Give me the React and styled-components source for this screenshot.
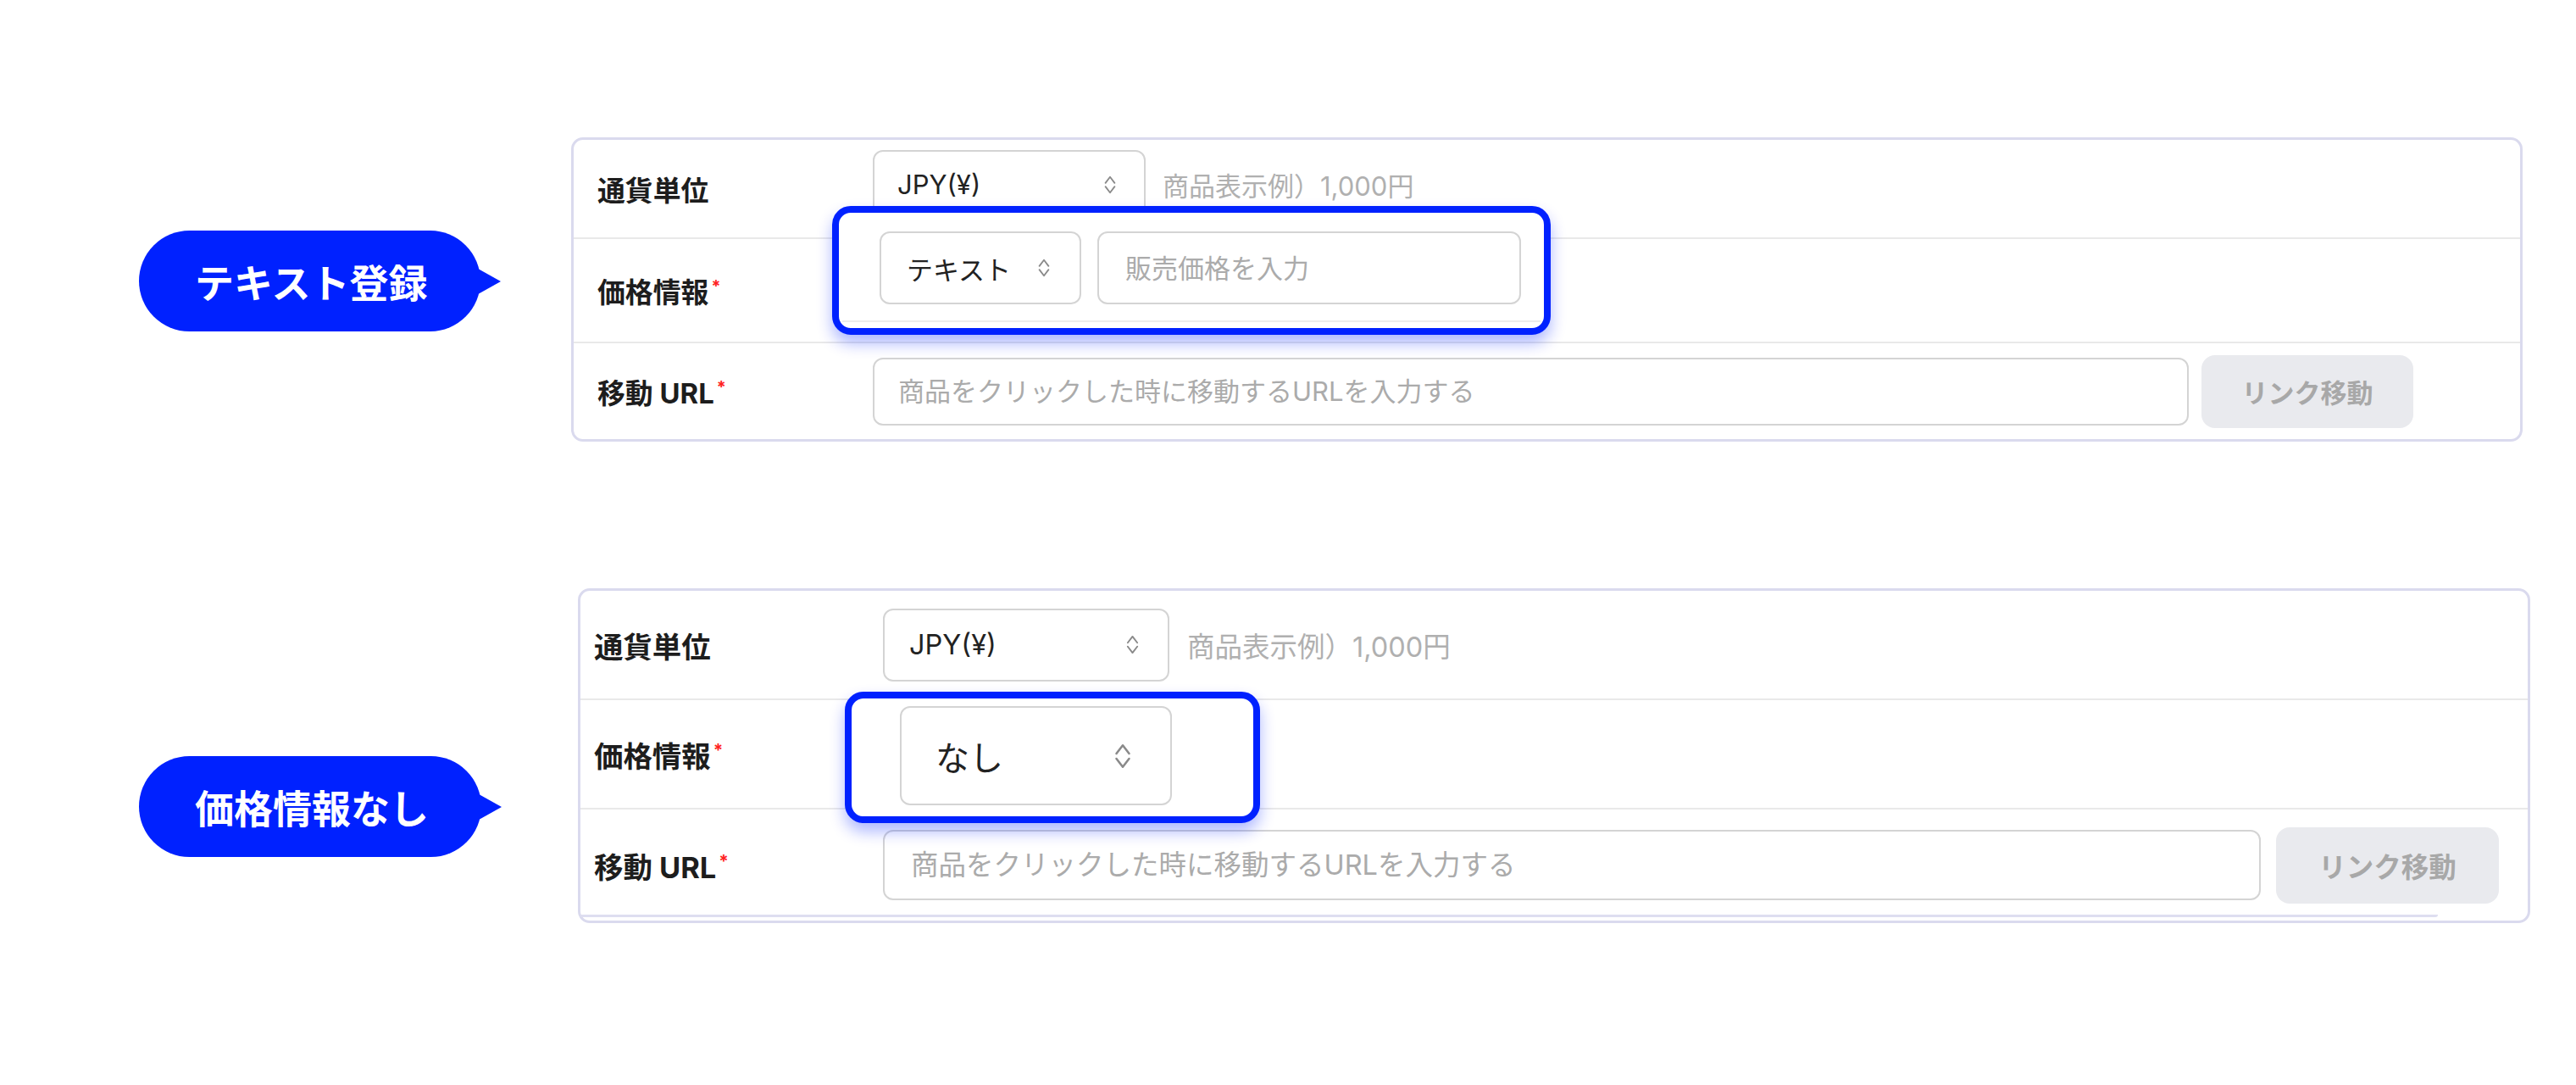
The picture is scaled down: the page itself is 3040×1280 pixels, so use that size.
import React from 'react';
import styled, { createGlobalStyle } from 'styled-components';

const BLUE = '#0021ff';

const GlobalStyle = createGlobalStyle`
  html, body {
    margin: 0;
    padding: 0;
    background: #fff;
  }
  body {
    font-family: 'Inter', 'Noto Sans CJK JP', sans-serif;
    color: #222;
  }
  * {
    box-sizing: border-box;
  }
`;

const Page = styled.div`
  width: 3040px;
  min-height: 1280px;
  display: flex;
  flex-direction: column;
`;

const Section = styled.section`
  display: flex;
  align-items: flex-start;
  padding-left: 164px;
  margin-top: ${({ $top }) => $top}px;
`;

const BubbleSlot = styled.div`
  flex: 0 0 ${({ $w }) => $w}px;
  padding-top: ${({ $drop }) => $drop}px;
`;

// callout bubble with a small tip on the right
const Bubble = styled.div`
  position: relative;
  display: inline-flex;
  align-items: center;
  height: 119px;
  padding: 0 62px 2px 66px;
  border-radius: 60px;
  background: ${BLUE};
  color: #fff;
  font-family: 'Noto Sans CJK JP', sans-serif;
  font-size: 46px;
  font-weight: 700;
  white-space: nowrap;

  &::after {
    content: '';
    position: absolute;
    right: -24px;
    top: 50%;
    transform: translateY(-50%);
    border-left: 34px solid ${BLUE};
    border-top: 19px solid transparent;
    border-bottom: 19px solid transparent;
  }
`;

const Card = styled.div`
  position: relative;
  width: ${({ $w }) => $w}px;
  border: 3px solid #dadaee;
  border-radius: 14px;
  background: #fff;
  font-size: ${({ $fs }) => $fs}px;

  ${({ $inner }) =>
    $inner &&
    `
    &::after {
      content: '';
      position: absolute;
      left: 0;
      right: 106px;
      bottom: 4px;
      height: 3px;
      background: #dedef0;
      border-bottom-right-radius: 6px;
    }
  `}
`;

const Row = styled.div`
  position: relative;
  display: flex;
  align-items: center;
  height: ${({ $h }) => $h}px;
  border-bottom: 2px solid #e9e9e9;

  &:last-child {
    border-bottom: none;
  }
`;

const Label = styled.div`
  flex: 0 0 ${({ $w }) => $w}px;
  padding-left: ${({ $pad }) => $pad}px;
  font-size: 1.06em;
  font-weight: 700;
  color: #1d1d1d;
  white-space: nowrap;
`;

const Req = styled.span`
  color: #ff2222;
  font-size: 0.6em;
  vertical-align: super;
  margin-left: 3px;
`;

const Controls = styled.div`
  position: relative;
  flex: 1;
  align-self: stretch;
  display: flex;
  align-items: center;
  gap: ${({ $gap }) => $gap || 0}px;
`;

const Select = styled.div`
  flex: 0 0 ${({ $w }) => $w}px;
  height: ${({ $h }) => $h}px;
  display: flex;
  align-items: center;
  justify-content: space-between;
  padding: 0 ${({ $pr }) => $pr}px 0 ${({ $pl }) => $pl}px;
  border: 2px solid #d4d4d4;
  border-radius: 12px;
  background: #fff;
  color: #222;
  font-size: ${({ $fs }) => ($fs ? `${$fs}px` : 'inherit')};
  white-space: nowrap;
`;

const Hint = styled.span`
  color: #b0b0b0;
  white-space: nowrap;
`;

const TextInput = styled.input`
  flex: 0 0 ${({ $w }) => $w}px;
  width: ${({ $w }) => $w}px;
  height: ${({ $h }) => $h}px;
  padding: 0 0 0 ${({ $pl }) => $pl}px;
  border: 2px solid #d4d4d4;
  border-radius: 12px;
  background: #fff;
  font: inherit;
  color: #222;
  outline: none;

  &::placeholder {
    color: #ababab;
  }
`;

const LinkButton = styled.button`
  flex: 0 0 ${({ $w }) => $w}px;
  height: ${({ $h }) => $h}px;
  border: none;
  border-radius: 16px;
  background: #e9eaee;
  color: #a8a8a8;
  font: inherit;
  font-weight: 700;
  cursor: default;
`;

// blue highlight frame laid over the price row
const Highlight = styled.div`
  position: absolute;
  z-index: 2;
  top: ${({ $top }) => $top}px;
  left: ${({ $left }) => $left}px;
  width: ${({ $w }) => $w}px;
  height: ${({ $h }) => $h}px;
  display: flex;
  align-items: flex-start;
  gap: 19px;
  padding: ${({ $pad }) => $pad};
  border: 8px solid ${BLUE};
  border-radius: 22px;
  background: #fff;
  box-shadow: 0 10px 18px rgba(0, 33, 255, 0.32);

  ${({ $line }) =>
    $line &&
    `
    &::before {
      content: '';
      position: absolute;
      left: 4px;
      right: 4px;
      bottom: 7px;
      height: 2px;
      background: #ececec;
    }
  `}
`;

const UpDown = ({ w = 16, h = 26 }) => (
  <svg
    width={w}
    height={h}
    viewBox="0 0 14 24"
    fill="none"
    stroke="#8a8a8a"
    strokeWidth="1.7"
    strokeLinecap="round"
    strokeLinejoin="round"
  >
    <path d="M2 10 L7 3.5 L12 10" />
    <path d="M2 14 L7 20.5 L12 14" />
  </svg>
);

const App = () => {
  return (
    <Page>
      <GlobalStyle />

      {/* テキスト登録 */}
      <Section $top={162}>
        <BubbleSlot $w={510} $drop={110}>
          <Bubble>テキスト登録</Bubble>
        </BubbleSlot>
        <Card $w={2303} $fs={31}>
          <Row $h={117}>
            <Label $w={353} $pad={28}>通貨単位</Label>
            <Controls $gap={20}>
              <Select $w={322} $h={81} $pl={27} $pr={32} style={{ marginTop: -10 }}>
                JPY(¥)
                <UpDown />
              </Select>
              <Hint style={{ marginTop: -10 }}>商品表示例）1,000円</Hint>
            </Controls>
          </Row>
          <Row $h={123}>
            <Label $w={353} $pad={28}>
              価格情報<Req>*</Req>
            </Label>
            <Controls>
              <Highlight $top={-39} $left={-48} $w={848} $h={152} $pad="22px 27px 28px 48px" $line>
                <Select $w={238} $h={86} $pl={30} $pr={34}>
                  テキスト
                  <UpDown />
                </Select>
                <TextInput $w={500} $h={86} $pl={31} placeholder="販売価格を入力" />
              </Highlight>
            </Controls>
          </Row>
          <Row $h={113}>
            <Label $w={353} $pad={28}>
              移動 URL<Req>*</Req>
            </Label>
            <Controls $gap={15}>
              <TextInput
                $w={1553}
                $h={80}
                $pl={28}
                placeholder="商品をクリックした時に移動するURLを入力する"
              />
              <LinkButton $w={250} $h={86}>リンク移動</LinkButton>
            </Controls>
          </Row>
        </Card>
      </Section>

      {/* 価格情報なし */}
      <Section $top={173}>
        <BubbleSlot $w={518} $drop={198}>
          <Bubble>価格情報なし</Bubble>
        </BubbleSlot>
        <Card $w={2304} $fs={32.5} $inner>
          <Row $h={129}>
            <Label $w={357} $pad={16}>通貨単位</Label>
            <Controls $gap={21}>
              <Select $w={338} $h={86} $pl={29} $pr={33}>
                JPY(¥)
                <UpDown w={17} h={27} />
              </Select>
              <Hint>商品表示例）1,000円</Hint>
            </Controls>
          </Row>
          <Row $h={129}>
            <Label $w={357} $pad={16}>
              価格情報<Req>*</Req>
            </Label>
            <Controls>
              <Highlight $top={-10} $left={-45} $w={490} $h={155} $pad="9px 0 0 57px">
                <Select $w={321} $h={117} $pl={40} $pr={45} $fs={40}>
                  なし
                  <UpDown w={22} h={36} />
                </Select>
              </Highlight>
            </Controls>
          </Row>
          <Row $h={131}>
            <Label $w={357} $pad={16}>
              移動 URL<Req>*</Req>
            </Label>
            <Controls $gap={18}>
              <TextInput
                $w={1626}
                $h={83}
                $pl={31}
                placeholder="商品をクリックした時に移動するURLを入力する"
              />
              <LinkButton $w={263} $h={90}>リンク移動</LinkButton>
            </Controls>
          </Row>
        </Card>
      </Section>
    </Page>
  );
};

export default App;
